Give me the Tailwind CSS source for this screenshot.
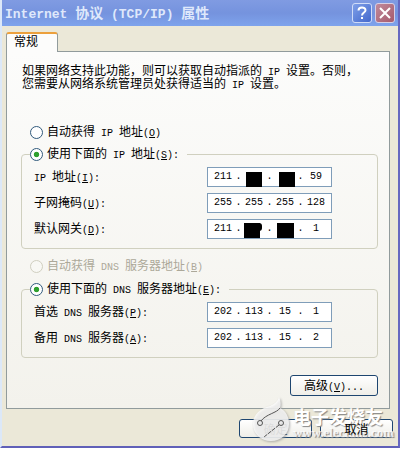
<!DOCTYPE html>
<html lang="zh-CN">
<head>
  <meta charset="UTF-8" />
  <meta name="viewport" content="width=device-width, initial-scale=1.0"/>
  <title>Internet 协议 (TCP/IP) 属性</title>
  <script src="https://cdn.jsdelivr.net/npm/@tailwindcss/browser@4"></script>
</head>
<body class="bg-white font-['Noto_Sans_CJK_SC',sans-serif] text-xs text-black">

  <div class="relative mr-[2px] border-l-2 border-r-2 border-b-2 border-l-[#dce8f8] border-r-[#6668c0] border-b-[#6060b8] bg-[#ebe8d8]">

    <!-- title bar -->
    <header class="flex h-[26px] items-center bg-linear-to-b from-[#809be2] via-[#7593de] to-[#7ea3ec] px-[3px]">
      <h1 class="flex-1 whitespace-pre text-sm leading-5 font-bold text-[#dfe8fb]"><span class="font-['Liberation_Mono',monospace] text-[13px]">Internet </span>协议<span class="font-['Liberation_Mono',monospace] text-[13px]"> (TCP/IP) </span>属性</h1>
      <div class="flex gap-[3px]">
        <button type="button" aria-label="帮助" class="flex size-5 items-center justify-center rounded-[3px] border border-[#d0dcf8] bg-linear-to-br from-[#7f9fe8] to-[#4468cc]">
          <svg class="size-4" viewBox="0 0 16 16" fill="none" stroke="#fff" stroke-width="2"><path d="M4.500 5.500C4.500 1.500 11.500 1.500 11.500 5.200C11.500 7.500 8 7.500 8 10.500"/><path d="M8 12v2"/></svg>
        </button>
        <button type="button" aria-label="关闭" class="flex size-5 items-center justify-center rounded-[3px] border border-[#d8cfe4] bg-linear-to-br from-[#c08a9c] to-[#a65a6c]">
          <svg class="size-4" viewBox="0 0 16 16" stroke="#fff" stroke-width="2"><path d="M3 3l10 10M13 3L3 13"/></svg>
        </button>
      </div>
    </header>

    <main class="pl-1 pr-2 pt-1.5">
      <button type="button" class="relative z-10 block h-5 w-[52px] rounded-t-[3px] border-x border-t-2 border-x-[#919b9c] border-t-[#eca03c] bg-[#fcfcfb] pr-3 pb-1 leading-[14px]">常规</button>

      <section class="-mt-px border border-[#919b9c] bg-linear-to-b from-[#fcfcfb] to-[#f3f2ec] px-3.5 pb-3 pt-[11px]">
        <p class="px-px leading-[13px]">如果网络支持此功能，则可以获取自动指派的<span class="whitespace-pre font-['Liberation_Mono',monospace] text-[10px] leading-[0]"> IP </span>设置。否则，<br>您需要从网络系统管理员处获得适当的<span class="whitespace-pre font-['Liberation_Mono',monospace] text-[10px] leading-[0]"> IP </span>设置。</p>

        <label class="mt-[35px] ml-[9px] flex h-4 items-center gap-1">
          <input type="radio" name="ip" class="size-[13px] appearance-none rounded-full border border-[#315a7c] bg-white">
          <span>自动获得<span class="whitespace-pre font-['Liberation_Mono',monospace] text-[10px]"> IP </span>地址<span class="font-['Liberation_Mono',monospace] text-[10px]">(<u>O</u>)</span></span>
        </label>
        <fieldset class="mt-1.5 mr-[-3px] rounded-[4px] border border-[#d0d0bf] pb-[9px] pl-3">
          <legend class="-ml-1 pr-2">
            <label class="flex h-4 items-center gap-1">
              <input type="radio" name="ip" checked class="size-[13px] appearance-none rounded-full border border-[#315a7c] bg-white bg-radial from-[#2fa02f] from-30% to-white to-40%">
              <span>使用下面的<span class="whitespace-pre font-['Liberation_Mono',monospace] text-[10px]"> IP </span>地址<span class="font-['Liberation_Mono',monospace] text-[10px]">(<u>S</u>):</span></span>
            </label>
          </legend>
          <div class="grid gap-y-1.5 pt-[5px] pr-[45px]">
            <div class="flex items-center justify-between">
              <label for="ip1"><span class="whitespace-pre font-['Liberation_Mono',monospace] text-[10px]">IP </span>地址<span class="font-['Liberation_Mono',monospace] text-[10px]">(<u>I</u>):</span></label>
              <div class="relative flex h-5 w-[125px] items-center border border-[#7f9db9] bg-white pl-[3px] font-['Liberation_Mono',monospace] text-[10px]">
                <input id="ip1" value="211" class="w-6 text-center"><span class="w-[7px] text-center">.</span>
                <input aria-label="IP 地址 2" class="w-6 text-center"><span class="w-[7px] text-center">.</span>
                <input aria-label="IP 地址 3" class="w-6 text-center"><span class="w-[7px] text-center">.</span>
                <input aria-label="IP 地址 4" value="59" class="w-6 text-center">
                <span class="absolute left-[38px] top-1 h-[15px] w-4 bg-black"></span>
                <span class="absolute left-[71px] top-1 h-[15px] w-4 bg-black"></span>
              </div>
            </div>
            <div class="flex items-center justify-between">
              <label for="mask1">子网掩码<span class="font-['Liberation_Mono',monospace] text-[10px]">(<u>U</u>):</span></label>
              <div class="flex h-5 w-[125px] items-center border border-[#7f9db9] bg-white pl-[3px] font-['Liberation_Mono',monospace] text-[10px]">
                <input id="mask1" value="255" class="w-6 text-center"><span class="w-[7px] text-center">.</span>
                <input aria-label="子网掩码 2" value="255" class="w-6 text-center"><span class="w-[7px] text-center">.</span>
                <input aria-label="子网掩码 3" value="255" class="w-6 text-center"><span class="w-[7px] text-center">.</span>
                <input aria-label="子网掩码 4" value="128" class="w-6 text-center">
              </div>
            </div>
            <div class="flex items-center justify-between">
              <label for="gate1">默认网关<span class="font-['Liberation_Mono',monospace] text-[10px]">(<u>D</u>):</span></label>
              <div class="relative flex h-5 w-[125px] items-center border border-[#7f9db9] bg-white pl-[3px] font-['Liberation_Mono',monospace] text-[10px]">
                <input id="gate1" value="211" class="w-6 text-center"><span class="w-[7px] text-center">.</span>
                <input aria-label="默认网关 2" class="w-6 text-center"><span class="w-[7px] text-center">.</span>
                <input aria-label="默认网关 3" class="w-6 text-center"><span class="w-[7px] text-center">.</span>
                <input aria-label="默认网关 4" value="1" class="w-6 text-center">
                <span class="absolute left-9 top-[3px] h-[15px] w-4 bg-black"></span>
                <span class="absolute left-12 top-[3px] h-2 w-[6px] rounded-sm bg-black"></span>
                <span class="absolute left-[69px] top-[3px] h-[15px] w-[17px] bg-black"></span>
              </div>
            </div>
          </div>
        </fieldset>

        <label class="mt-[9px] ml-[9px] flex h-4 items-center gap-1 text-[#aca899]">
          <input type="radio" name="dns" disabled class="size-[13px] appearance-none rounded-full border border-[#d0cfc0] bg-[#f8f8f4]">
          <span>自动获得<span class="whitespace-pre font-['Liberation_Mono',monospace] text-[10px]"> DNS </span>服务器地址<span class="font-['Liberation_Mono',monospace] text-[10px]">(<u>B</u>)</span></span>
        </label>
        <fieldset class="mt-[7px] mr-[-3px] rounded-[4px] border border-[#d0d0bf] pb-[9px] pl-3">
          <legend class="-ml-1 pr-2">
            <label class="flex h-4 items-center gap-1">
              <input type="radio" name="dns" checked class="size-[13px] appearance-none rounded-full border border-[#315a7c] bg-white bg-radial from-[#2fa02f] from-30% to-white to-40%">
              <span>使用下面的<span class="whitespace-pre font-['Liberation_Mono',monospace] text-[10px]"> DNS </span>服务器地址<span class="font-['Liberation_Mono',monospace] text-[10px]">(<u>E</u>):</span></span>
            </label>
          </legend>
          <div class="grid gap-y-1.5 pt-[5px] pr-[45px]">
            <div class="flex items-center justify-between">
              <label for="dns1">首选<span class="whitespace-pre font-['Liberation_Mono',monospace] text-[10px]"> DNS </span>服务器<span class="font-['Liberation_Mono',monospace] text-[10px]">(<u>P</u>):</span></label>
              <div class="flex h-5 w-[125px] items-center border border-[#7f9db9] bg-white pl-[3px] font-['Liberation_Mono',monospace] text-[10px]">
                <input id="dns1" value="202" class="w-6 text-center"><span class="w-[7px] text-center">.</span>
                <input aria-label="首选 DNS 2" value="113" class="w-6 text-center"><span class="w-[7px] text-center">.</span>
                <input aria-label="首选 DNS 3" value="15" class="w-6 text-center"><span class="w-[7px] text-center">.</span>
                <input aria-label="首选 DNS 4" value="1" class="w-6 text-center">
              </div>
            </div>
            <div class="flex items-center justify-between">
              <label for="alt1">备用<span class="whitespace-pre font-['Liberation_Mono',monospace] text-[10px]"> DNS </span>服务器<span class="font-['Liberation_Mono',monospace] text-[10px]">(<u>A</u>):</span></label>
              <div class="flex h-5 w-[125px] items-center border border-[#7f9db9] bg-white pl-[3px] font-['Liberation_Mono',monospace] text-[10px]">
                <input id="alt1" value="202" class="w-6 text-center"><span class="w-[7px] text-center">.</span>
                <input aria-label="备用 DNS 2" value="113" class="w-6 text-center"><span class="w-[7px] text-center">.</span>
                <input aria-label="备用 DNS 3" value="15" class="w-6 text-center"><span class="w-[7px] text-center">.</span>
                <input aria-label="备用 DNS 4" value="2" class="w-6 text-center">
              </div>
            </div>
          </div>
        </fieldset>

        <div class="mt-[17px] -mr-[3px] flex justify-end">
          <button type="button" class="h-[21px] w-[88px] rounded-[3px] border border-[#1e4670] bg-linear-to-b from-white to-[#efeee8] leading-none">高级<span class="font-['Liberation_Mono',monospace] text-[10px]">(<u>V</u>)...</span></button>
        </div>
      </section>

      <footer class="-mr-[3px] flex justify-end gap-2 pt-2.5 pb-2">
        <button type="button" class="h-[19px] w-[73px] rounded-[3px] border border-[#1e4670] bg-linear-to-b from-white to-[#efeee8] leading-none">确定</button>
        <button type="button" class="h-[19px] w-[73px] rounded-[3px] border border-[#1e4670] bg-linear-to-b from-white to-[#efeee8] leading-none"><span class="relative z-10">取消</span></button>
      </footer>
    </main>

    <!-- site watermark -->
    <div class="pointer-events-none absolute right-1 bottom-1 flex items-end gap-1 text-white">
      <svg class="h-[46px] w-9 drop-shadow-[1px_1px_1px_#999]" viewBox="0 0 36 46">
        <path d="M26 1C28 5 28 9 27 12C33 15 36 21 36 28C36 38 28 45 18 45C8 45 0 38 0 28C0 18 8 12 17 10C22 8 25 5 26 1Z" fill="#fff" fill-opacity=".75"/>
        <g fill="none" stroke="#555"><circle cx="7" cy="27" r="2.500"/><path d="M8 25C13 18 24 17 27 12"/><circle cx="28" cy="27" r="2.500"/><path d="M26 29L11 41" stroke-dasharray="4 1"/></g>
      </svg>
      <div class="pb-1 text-shadow-[1px_1px_1px_#888]">
        <p class="text-lg leading-[22px] font-bold">电子发烧友</p>
        <p class="font-['Liberation_Serif',serif] text-[13px] leading-[11px] font-bold text-white/80">www.elecfans.com</p>
      </div>
    </div>
  </div>
</body>
</html>
